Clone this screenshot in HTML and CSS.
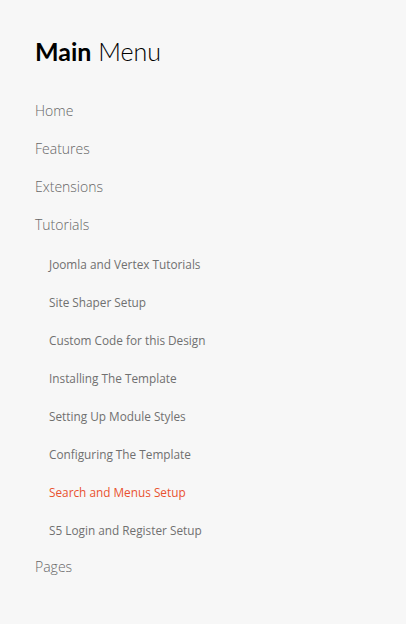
FILE: index.html
```html
<html>
  <head>
    <link rel="stylesheet" href="styles.css">
    <title>Main Menu</title>
  </head>
  <body>
    <div class="module">
      <h3 class="module-title"><span class="strong">Main</span> Menu</h3>
      <ul class="menu">
        <li><a href="#">Home</a></li>
        <li><a href="#">Features</a></li>
        <li><a href="#">Extensions</a></li>
        <li>
          <a href="#">Tutorials</a>
          <ul class="submenu">
            <li><a href="#">Joomla and Vertex Tutorials</a></li>
            <li><a href="#">Site Shaper Setup</a></li>
            <li><a href="#">Custom Code for this Design</a></li>
            <li><a href="#">Installing The Template</a></li>
            <li><a href="#">Setting Up Module Styles</a></li>
            <li><a href="#">Configuring The Template</a></li>
            <li class="current"><a href="#">Search and Menus Setup</a></li>
            <li><a href="#">S5 Login and Register Setup</a></li>
          </ul>
        </li>
        <li><a href="#">Pages</a></li>
      </ul>
    </div>
  </body>
</html>
```

FILE: styles.css
```css
body {
  margin: 0;
  background-color: #f7f7f7;
  font-family: "Open Sans", sans-serif;
}

.module {
  padding: 34px 35px 30px 35px;
}

.module-title {
  margin: 0 0 24px 0;
  font-family: "Lato", sans-serif;
  font-size: 25px;
  font-weight: 300;
  color: #000;
  line-height: 34px;
}

.module-title .strong {
  font-weight: 700;
}

.menu,
.submenu {
  list-style: none;
  margin: 0;
  padding: 0;
}

.menu a {
  display: block;
  text-decoration: none;
  color: #666;
  font-size: 14px;
  font-weight: 300;
  line-height: 38px;
}

.submenu {
  padding-left: 14px;
  padding-top: 1px;
  margin-bottom: -1px;
}

.submenu a {
  font-size: 11.8px;
  font-weight: 400;
  color: #707070;
}

.submenu li.current a {
  color: #e9522f;
}
```
